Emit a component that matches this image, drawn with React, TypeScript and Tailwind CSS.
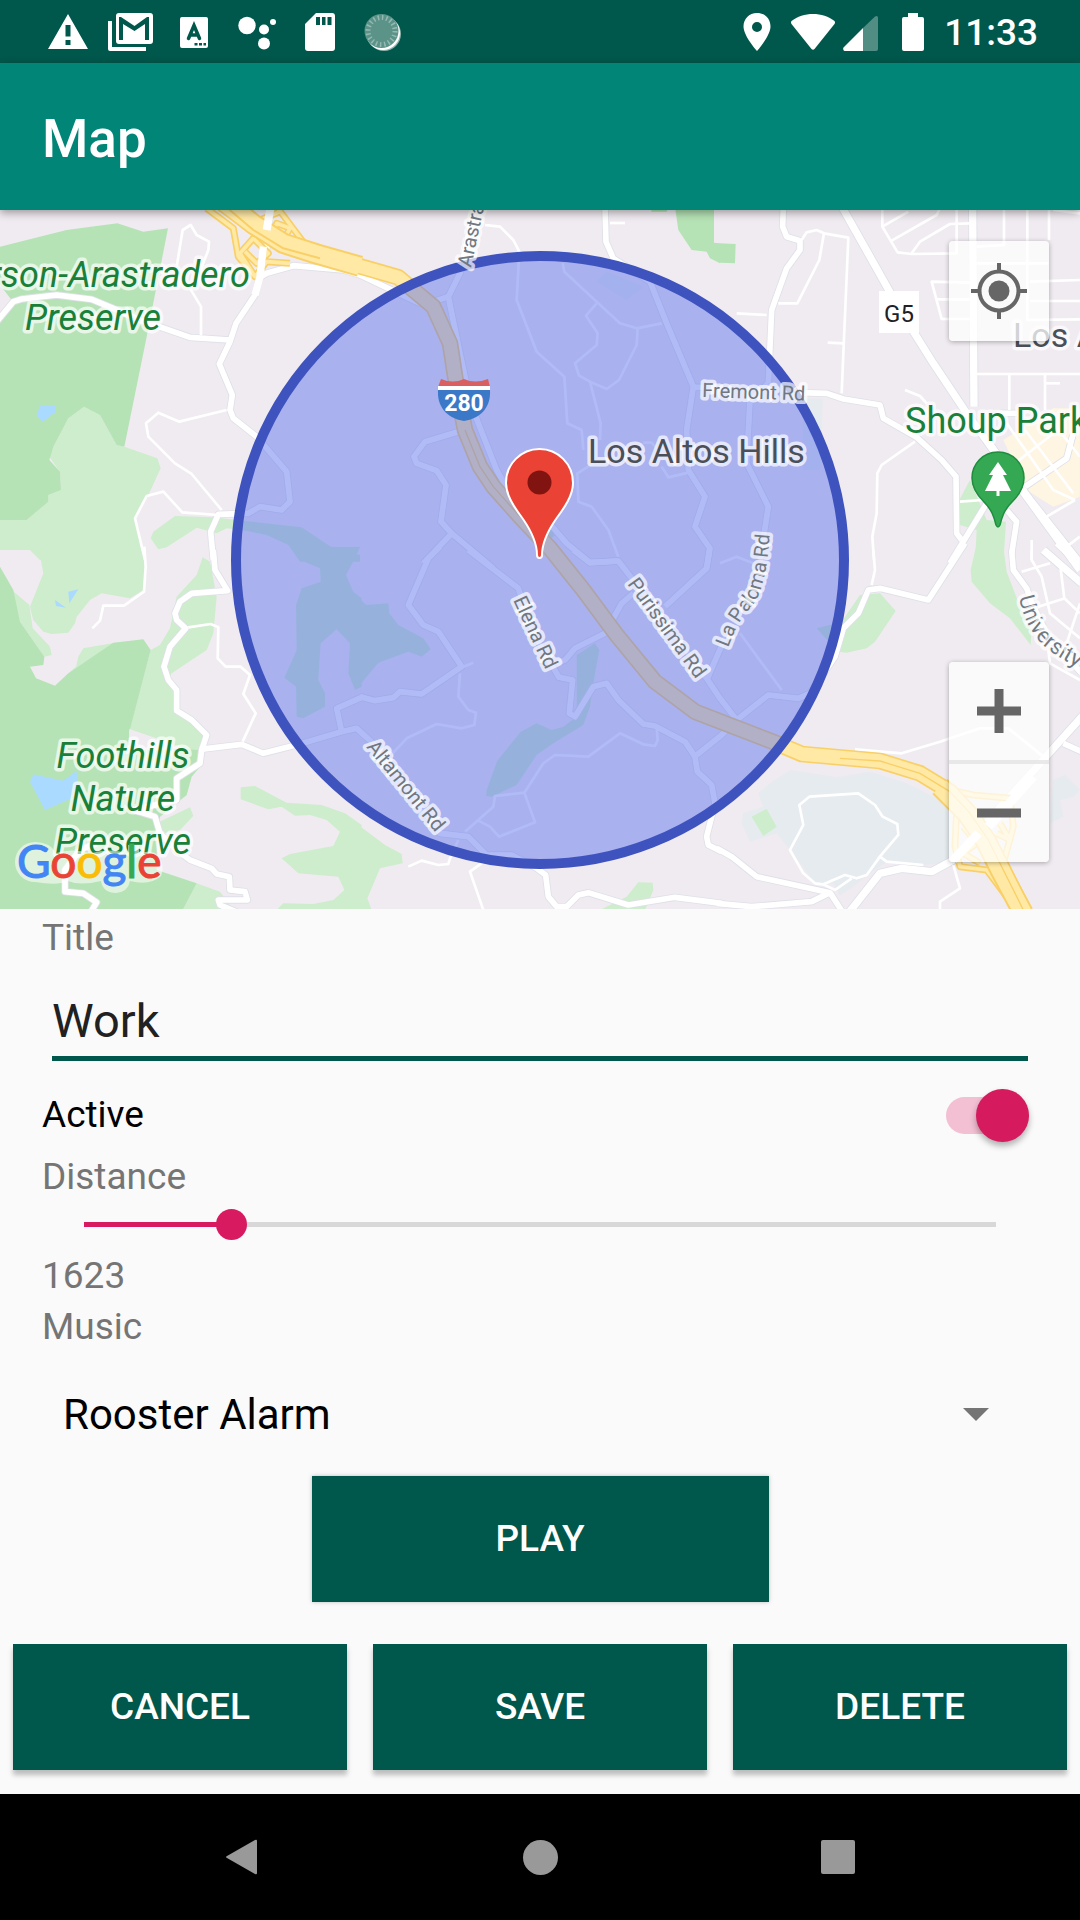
import { useState } from "react";

type Sheet = {
  x: number;
  y: number;
  dark?: string[];
  light?: string[];
  gray?: string[];
  town?: string[];
  ground?: string[];
  water?: string[];
  wide?: string[];
  medium?: string[];
  thin?: string[];
};

/* The map is surveyed in six sheets; every sheet is three units per pixel. */
const sheets: Sheet[] = [
  {
    x: 0,
    y: 600,
    dark: ["0,140 200,90 352,70 430,95 504,85 440,410 373,740 350,735 300,645 252,620 205,655 160,740 148,780 180,815 183,870 145,885 145,905 80,960 0,960"],
    light: [
      "148,770 180,815 183,870 145,885 145,905 80,960 0,960 0,1045 90,1050 120,1080 435,1080 405,955 445,885 482,805 472,775 373,740 350,735 300,645 252,620 205,655 160,740",
      "452,1015 460,995 525,948 640,952 730,962 905,982 995,1042 1080,1065 1080,1085 900,1085 865,1035 800,1005 725,990 680,985 650,1000 590,983 500,1042 475,1048",
    ],
    ground: ["0,255 35,300 0,345"],
    water: ["120,618 165,616 168,635 127,666 110,645"],
    medium: [
      "812,20 800,150 780,230 765,285 708,370 690,425 658,492 697,585 690,630 700,655 770,710 860,815 870,905 845,930 780,920 745,940 655,943 632,995 640,1080",
      "-10,365 40,305 65,297 170,285 275,298 340,325 420,360 570,412 690,420",
      "780,232 800,220 880,197 1030,210 1080,225 1260,310",
    ],
    thin: [
      "530,200 548,90 572,75 590,105 627,125 625,150 590,240 570,265 603,320 603,405",
      "680,630 538,665 475,638 438,670 445,710 525,790 575,822 665,930",
      "655,945 547,937 490,875 440,888 405,955 435,1080",
    ],
  },
  {
    x: 1080,
    y: 600,
    dark: ["945,20 1062,20 1062,128 1080,130 1080,190 1050,175 1040,155 995,150 955,90", "870,20 925,20 920,35 875,35"],
    gray: ["740,215 710,245 800,300 850,260"],
    light: ["560,1000 575,980 592,1000 575,1015"],
    medium: [
      "345,20 300,220 265,290 300,460 330,600 355,670 410,810 450,880 560,960 620,1030 690,1088 775,1083",
      "265,290 220,305",
      "735,20 738,125 760,175 870,245 920,370 1000,560 980,690 985,810 1035,890 1005,980 1050,1045 1040,1105",
      "295,695 195,725 162,770 170,790 230,812 258,855 243,965 275,1000 400,1105",
      "275,1000 190,1090",
      "1000,562 1090,562",
    ],
    thin: [
      "375,75 420,80 460,120 478,155 470,300 530,455 613,530 622,670 665,690 670,750",
      "750,69 795,69",
      "608,190 613,215 710,305 780,370 830,385 905,370",
      "710,310 678,347 713,400 710,435 645,490 657,527 690,545 740,567 777,540 830,435 833,385",
      "690,545 722,670 720,720",
      "905,800 925,832 985,818",
      "700,790 652,820 655,905 695,920 745,990 775,1070",
      "850,728 875,728 890,745",
    ],
  },
  {
    x: 2160,
    y: 600,
    dark: ["0,130 47,132 45,190 0,188"],
    light: ["750,840 800,960 858,965 850,1090 765,1090 770,990 720,975 718,900"],
    gray: ["250,595 308,597 305,700 300,810 250,810"],
    town: ["850,720 1000,625 1080,625 1080,890 1000,920 920,870"],
    wide: ["360,10 540,330 640,490 740,640 930,900 1080,1090", "758,20 762,620", "800,720 920,890 1080,1110"],
    medium: [
      "190,20 188,80 200,110 240,122 240,150 200,205 155,330 145,550",
      "145,550 90,600 80,790 145,920 120,1080",
      "240,578 320,580 370,597 480,615 490,655 590,712 665,780 708,830 710,1000 725,1020",
      "1060,700 1040,775 915,860",
      "800,910 690,1090",
      "860,930 890,965 875,1060",
      "830,640 890,640",
    ],
    thin: [
      "245,120 260,97 290,90 312,100 385,113 365,580",
      "312,100 298,180 232,310 175,310",
      "323,428 370,430",
      "50,340 140,345",
      "487,20 487,80 533,157 575,162 710,160 710,20",
      "575,160 600,125 690,72 750,70",
      "487,80 565,35",
      "515,122 650,45 660,25",
      "750,357 665,357 635,245 750,248",
      "650,298 750,298",
      "852,20 852,135 770,140",
      "922,20 922,360 1080,358",
      "987,20 987,120",
      "770,190 985,190",
      "930,245 1080,240",
      "930,303 1080,303",
      "770,522 1080,522",
      "868,522 868,630",
      "975,522 975,630",
      "975,550 1020,550",
      "585,725 485,795 472,820 470,940 457,1010 462,1080",
      "555,570 600,588 620,610",
      "860,670 1000,870 1065,900",
      "915,690 1060,880",
      "985,650 1080,770",
      "885,790 1000,700",
      "980,950 1065,900",
      "1080,1010 1040,1040",
      "720,905 790,900",
      "935,1020 935,1080",
      "1000,30 1080,40",
    ],
  },
  {
    x: 0,
    y: 1650,
    dark: ["0,50 40,120 60,215 133,320 130,345 90,350 108,385 165,407 205,370 340,278 430,268 452,300 388,545 400,590 600,600 600,650 575,680 560,735 480,800 470,840 470,960 590,1000 548,1080 0,1080"],
    light: [
      "115,-10 425,-10 437,50 430,120 390,145 305,130 270,150 230,200 225,220 205,248 155,252 130,245 100,210 90,170 130,70",
      "-5,0 -5,-10 110,-10 90,0",
      "35,120 88,165 98,235 150,290 155,315 133,320 60,215",
      "228,350 235,320 250,295 345,278 205,370",
      "452,300 480,285 510,235 530,140 590,75 608,22 630,35 650,140 640,250 620,300 515,370 500,400 530,430 530,480 625,555 600,610 388,540",
      "470,820 570,772 580,797 540,840 490,850",
      "548,1080 590,1000 660,1025 700,1080",
      "722,712 765,708 860,758 965,765 1035,790 1085,825 1085,1080 830,1080 850,1060 940,1062 1000,1050 1033,1020 1015,980 895,970 845,925 870,912 1000,888 1020,845 980,810 930,795 885,797 845,770 805,778 722,748",
      "880,-10 900,30 960,55 962,95 905,115 888,165 890,300 853,383 888,410 890,500 910,505 975,470 975,430 955,390 962,280 1010,238 1050,280 1045,370 1065,420 1085,410 1085,145 1060,125 1038,75 1070,15 1080,-10",
    ],
    ground: ["388,537 500,575 510,600 385,600"],
    water: ["205,125 235,118 208,160", "165,150 198,173 168,168", "90,695 100,673 190,692 230,662 232,700 215,745 135,780"],
    medium: [
      "640,0 645,60 683,122 575,130 540,155 525,190 530,210 557,235 510,290 492,350 505,390 530,420 530,482 575,510 620,555 605,600 600,640 530,685 530,750 400,780 465,800 480,850 530,900 570,930 635,955 650,972 688,980 690,1020 735,1025 742,1050 655,1050 660,1065 720,1090",
      "600,598 725,583 790,610 900,582 1025,545 1070,535 1130,590",
      "1025,545 1010,475 1090,440",
      "290,880 240,900 195,960 195,1025 250,1030 290,1057 270,1090",
    ],
    thin: [
      "433,-10 437,50 432,125 372,167 310,167 300,212 277,235",
      "565,232 632,222 655,232 653,325 677,350 722,350 750,375 730,432 767,490 728,575",
    ],
  },
  {
    x: 1080,
    y: 1650,
    light: [
      "-5,145 20,165 85,160 88,190 115,225 190,265 212,298 185,320 145,305 55,338 -5,410",
      "650,315 705,280 718,300 700,400 690,470 670,525 580,580 530,615 470,705 395,740 378,738 380,720 412,632 482,545 530,520 575,540 610,530 650,500",
      "-5,825 75,885 125,912 128,940 60,955 22,1045 35,1080 -5,1080",
      "720,1080 800,1040 835,997 878,998 880,1020 855,1080",
    ],
    medium: [
      "0,440 45,452 100,443 120,425 185,432 305,350 235,245 190,225 145,165 205,25 240,-10",
      "325,0 475,115 520,250 590,370 597,382 638,390 628,490 645,500 700,410 740,400 775,450 850,522 885,528 975,575 1005,620 1012,665 1055,705 1065,760 1040,860 1045,885 1085,905",
      "590,340 615,330 645,295 735,250 785,160 820,130",
      "1010,615 1085,555 1130,510",
      "640,0 690,38 775,33 850,130 1030,370 1080,445 1130,510",
      "1048,0 1040,55 915,170",
      "1040,390 1110,230",
      "50,590 240,850 325,860 380,915 455,915 530,955 557,975 565,1040 590,1070 620,1070 655,1035 685,1028 805,1065 945,1042 1085,1060",
    ],
    thin: [
      "310,350 340,338",
      "300,370 295,440 325,480 348,488 343,525 305,535 230,522 140,565 100,608 60,580",
      "890,530 893,570 885,588 850,583 780,550 685,620 585,615 550,640 493,728 405,738 400,770 315,845",
      "355,812 390,830 417,860 525,817 493,728",
      "295,870 270,925 265,942 235,945 185,932 145,950",
      "385,925 330,965 370,1080",
    ],
  },
  {
    x: 2160,
    y: 1650,
    gray: [
      "150,700 210,660 350,682 450,665 560,700 690,765 700,935 610,945 500,935 430,985 400,1010 360,1035 340,1000 285,1000 210,900 170,850 90,875 65,820 70,790 130,770 115,730",
      "1000,690 1035,675 1080,720 1060,740 1020,750 1030,800 990,820",
    ],
    light: [
      "95,800 140,777 170,830 130,858",
      "290,235 365,215 420,135 480,130 527,183 465,275 440,295 380,308 355,305 330,280",
      "768,-10 850,-10 860,65 900,170 935,240 932,285 870,205 810,160 755,95 752,60",
    ],
    wide: ["385,1090 480,970 545,955 635,965 700,930 1090,495", "970,0 1085,100"],
    medium: [
      "-10,895 35,920 110,980 330,1028 370,1090",
      "-10,1060 95,1070 275,1055 330,1028",
      "1030,580 1085,605",
      "50,510 145,435 235,445 270,430 345,320 370,235 415,190 445,120 480,115 625,150 735,-20",
      "875,0 880,60 920,115 940,170 985,260 1085,370",
      "1010,-20 1085,50",
    ],
    thin: [
      "475,925 535,855 532,822 488,800 465,765 415,730 268,740 238,765 250,825 210,900 250,970 285,1000 310,1003 375,975 410,985 440,975 480,920 500,935 610,945",
      "310,1003 345,1020 395,985",
      "405,598 545,610 660,575 780,535 865,535 970,620",
      "700,945 720,1015 660,1055 660,1080",
      "460,0 465,60 455,105",
      "60,250 185,420",
      "0,40 50,20 100,40",
      "935,0 935,30 965,80 990,190 1080,265",
      "1020,40 1033,145 1080,190",
      "905,65 990,40",
      "955,170 1035,145",
      "1080,160 1040,280",
      "985,300 990,340 1080,390",
    ],
  },
];

const freeway =
  "640,590 760,680 850,730 950,762 1080,799 1195,832 1300,920 1350,1030 1370,1160 1395,1290 1440,1400 1480,1460 1560,1550 1650,1645 1750,1770 1850,1905 1965,2045 2085,2135 2330,2230 2405,2262 2640,2283 2760,2320 2850,2375 2910,2440 2965,2520 3010,2610 3075,2740";

/* The freeway widens where its exits leave it. */
const exitLanes = ["660,590 760,672 850,730 950,762 1080,799", "2820,2360 2900,2440 2955,2520 3000,2610 3070,2740"];

const ramps = [
  "620,625 700,685 715,770 765,830 800,785 870,790",
  "765,830 720,760 760,715 805,760 770,790 735,755",
  "830,620 920,740",
  "720,640 780,660 840,635",
  "810,720 830,670 870,685 850,720",
  "2850,2370 2920,2385 3030,2395 3040,2480 3010,2590",
  "2870,2430 2865,2540 2880,2600 2960,2610 3020,2690",
  "2890,2480 2930,2530 2890,2560 2940,2590",
  "3000,2470 3030,2520 2990,2500",
];

function Lines({ sheet, kind, width, color }: { sheet: Sheet; kind: "wide" | "medium" | "thin"; width: number; color: string }) {
  return (
    <g transform={`translate(${sheet.x} ${sheet.y})`} fill="none" stroke={color} strokeWidth={width} strokeLinejoin="round">
      {(sheet[kind] ?? []).map((p) => (
        <polyline key={p} points={p} />
      ))}
    </g>
  );
}

function Areas({ sheet, kind, color }: { sheet: Sheet; kind: "dark" | "light" | "gray" | "town" | "ground" | "water"; color: string }) {
  return (
    <g transform={`translate(${sheet.x} ${sheet.y})`} fill={color}>
      {(sheet[kind] ?? []).map((p) => (
        <polygon key={p} points={p} />
      ))}
    </g>
  );
}

function MapDrawing() {
  return (
    <svg viewBox="0 210 1080 699" className="block w-full" role="img" aria-label="Map of Los Altos Hills">
      <rect y="210" width="1080" height="699" fill="#f0ebf0" />
      <g transform="scale(0.33333)">
        {sheets.map((s, i) => (
          <g key={i}>
            <Areas sheet={s} kind="gray" color="#e5ebee" />
            <Areas sheet={s} kind="town" color="#fef5e2" />
            <Areas sheet={s} kind="light" color="#cdedcd" />
            <Areas sheet={s} kind="dark" color="#b5e3b5" />
            <Areas sheet={s} kind="ground" color="#f0ebf0" />
            <Areas sheet={s} kind="water" color="#aadaff" />
          </g>
        ))}
        {sheets.map((s, i) => (
          <g key={i}>
            <Lines sheet={s} kind="wide" width={27} color="#dfe0e8" />
            <Lines sheet={s} kind="medium" width={22} color="#dfe0e8" />
          </g>
        ))}
        {sheets.map((s, i) => (
          <g key={i}>
            <Lines sheet={s} kind="thin" width={8} color="#ffffff" />
            <Lines sheet={s} kind="medium" width={17} color="#ffffff" />
            <Lines sheet={s} kind="wide" width={22} color="#ffffff" />
          </g>
        ))}
        <g fill="none" strokeLinejoin="round">
          {ramps.map((p) => (
            <polyline key={p} points={p} stroke="#f9d067" strokeWidth="21" />
          ))}
          {ramps.map((p) => (
            <polyline key={p} points={p} stroke="#ffe9a5" strokeWidth="11" />
          ))}
          {exitLanes.map((p) => (
            <polyline key={p} points={p} stroke="#f9d067" strokeWidth="64" />
          ))}
          <polyline points={freeway} stroke="#f9d067" strokeWidth="50" />
          {exitLanes.map((p) => (
            <polyline key={p} points={p} stroke="#ffe9a5" strokeWidth="52" />
          ))}
          <polyline points={freeway} stroke="#ffe9a5" strokeWidth="40" />
          <polyline points="1395,1290 1440,1400 1480,1460 1560,1550" stroke="#f9d067" strokeWidth="4" />
          <polyline points="2520,2275 2640,2283 2760,2320 2850,2375 2910,2440 2965,2520 3010,2610 3075,2740" stroke="#f9d067" strokeWidth="4" />
          <polyline points="660,605 760,690 850,745 960,775" stroke="#f9d067" strokeWidth="6" />
          <polyline points="812,620 800,690" stroke="#ffffff" strokeWidth="24" />
          <polyline points="790,740 780,830 765,885" stroke="#ffffff" strokeWidth="22" />
          <polyline points="2860,2580 2935,2500" stroke="#ffffff" strokeWidth="26" />
          <polyline points="2965,2480 3100,2330" stroke="#ffffff" strokeWidth="26" />
        </g>
      </g>

      <circle cx="540" cy="560" r="304" fill="#5a70ef" fillOpacity="0.47" stroke="none" />
      <circle cx="540" cy="560" r="304" fill="none" stroke="#3f53bf" strokeWidth="10" />

      <g
        fontFamily="Roboto, sans-serif"
        stroke="#ffffff"
        strokeOpacity="0.7"
        strokeWidth="7"
        strokeLinejoin="round"
        style={{ paintOrder: "stroke" }}
      >
        <g fontSize="36" fontStyle="italic" fill="#188038">
          <text x="250" y="287" textAnchor="end">rson-Arastradero</text>
          <text x="93" y="330" textAnchor="middle">Preserve</text>
          <text x="123" y="768" textAnchor="middle">Foothills</text>
          <text x="123" y="811" textAnchor="middle">Nature</text>
          <text x="123" y="854" textAnchor="middle">Preserve</text>
        </g>
        <text x="905" y="433" fontSize="36" fill="#188038">Shoup Park</text>
        <text x="588" y="463" fontSize="34" fill="#4a4f58">Los Altos Hills</text>
        <text x="1013" y="347" fontSize="34" fill="#4a4f58">Los Altos</text>
        <g fontSize="20" fill="#6f7880">
          <text transform="translate(702 397) rotate(2)">Fremont Rd</text>
          <text transform="translate(513 600) rotate(65)">Elena Rd</text>
          <text transform="translate(627 584) rotate(54)">Purissima Rd</text>
          <text transform="translate(366 747) rotate(51)">Altamont Rd</text>
          <text transform="translate(471 268) rotate(-78)">Arastradero Rd</text>
          <path id="paloma" d="M728 648 Q738 620 752 606 Q770 585 771 500" fill="none" stroke="none" />
          <text>
            <textPath href="#paloma">La Paloma Rd</textPath>
          </text>
          <path id="university" d="M1019 597 Q1026 630 1045 647 Q1070 668 1150 700" fill="none" stroke="none" />
          <text fontSize="22">
            <textPath href="#university">University Ave</textPath>
          </text>
        </g>
      </g>

      <rect x="879" y="291" width="40" height="42" fill="#ffffff" />
      <text x="899" y="322" fontSize="24" textAnchor="middle" fontFamily="Roboto, sans-serif" fill="#202124">G5</text>

      <path d="M441 379 Q453 384 464 379 Q475 384 488 379 L490 387 H438 Z" fill="#d96060" />
      <path d="M438 386 H490 V390 H438 Z" fill="#ffffff" />
      <path d="M438 390 H490 C491 405 483 418 464 421 C445 418 437 405 438 390 Z" fill="#3b79c8" />
      <text x="464" y="411" fontSize="23" fontWeight="700" textAnchor="middle" fontFamily="Roboto, sans-serif" fill="#ffffff">280</text>

      <path
        d="M539.500 449 C521 449 506 464 506 483 C506 495 514 507 523 519 C534 535 537 545 537 555 Q537 558 539.500 558 Q542 558 542 555 C542 545 545 535 556 519 C565 507 573 495 573 483 C573 464 558 449 539.500 449 Z"
        fill="#ea4335"
        stroke="#ffffff"
        strokeWidth="2"
      />
      <circle cx="539.500" cy="482.500" r="12" fill="#811411" />

      <path
        d="M998 452 C983 452 972 464 972 478 C972 488 977 495 984 502 C992 510 994 517 996 525 Q998 529 1000 525 C1002 517 1004 510 1012 502 C1019 495 1024 488 1024 478 C1024 464 1013 452 998 452 Z"
        fill="#34a853"
        stroke="#1e8e3e"
        strokeWidth="1.500"
      />
      <path d="M998 462 L1007 475 H1003 L1011 491 H999.500 V496 H996.500 V491 H985 L993 475 H989 Z" fill="#ffffff" />

      {/* Pale glow behind the provider's logo */}
      <path
        d="M35 842 a20 20 0 0 0 0 40 Q58 886 68 881 Q80 886 101 881 Q103 893 116 893 Q128 892 130 881 Q150 886 161 876 Q166 862 155 853 Q146 850 139 854 V845 H128 V853 Q108 848 92 853 Q70 848 56 853 Q50 842 35 842 Z"
        fill="#ffffff"
        fillOpacity="0.55"
      />
      <text x="17" y="878" fontSize="46" fontFamily="Lato, sans-serif" strokeWidth="1">
        <tspan fill="#4285f4" stroke="#4285f4">G</tspan>
        <tspan fill="#ea4335" stroke="#ea4335">o</tspan>
        <tspan fill="#fbbc05" stroke="#fbbc05">o</tspan>
        <tspan fill="#4285f4" stroke="#4285f4">g</tspan>
        <tspan fill="#34a853" stroke="#34a853">l</tspan>
        <tspan fill="#ea4335" stroke="#ea4335">e</tspan>
      </text>
    </svg>
  );
}

function StatusBar() {
  const slot = "flex w-[63px] justify-center";
  return (
    <div className="flex h-[63px] items-center justify-between bg-[#00574b] pr-[42px] pl-9 text-white">
      <div className="flex">
        <span className={slot}>
          <svg width="40" height="38" viewBox="0 0 40 38" fill="currentColor">
            <path fillRule="evenodd" d="M20 1 L40 36 H0 Z M17.500 12 V23.500 H22.500 V12 Z M17.500 27 V32 H22.500 V27 Z" />
          </svg>
        </span>
        <span className={slot}>
          <svg width="45" height="38" viewBox="0 0 45 38" fill="currentColor">
            <path d="M0 8 H4 V34 H38 V38 H2 Q0 38 0 36 Z" />
            <path fillRule="evenodd" d="M11 0 H42 Q45 0 45 3 V28 Q45 31 42 31 H11 Q8 31 8 28 V3 Q8 0 11 0 Z M11 4 V27 H15 V11 L26.500 18 L37 11 V27 H41 V4 H39 L26.500 13 L13 4 Z" />
          </svg>
        </span>
        <span className={slot}>
          <svg width="28" height="38" viewBox="0 0 28 38" fill="none">
            <rect y="4" width="28" height="31" rx="2" fill="white" />
            <path d="M8.500 25.500 L14 12.500 L19.500 25.500 M10 22 H18" stroke="#00574b" strokeWidth="3.500" strokeLinecap="round" />
            <path d="M14.500 30 h3 v2.500 h-3 Z M19 30 h3 v2.500 h-3 Z M23.500 30 h2.500 v2.500 h-2.500 Z" fill="#00574b" />
          </svg>
        </span>
        <span className={slot}>
          <svg width="38" height="38" viewBox="0 0 38 38" fill="currentColor">
            <circle cx="9" cy="12.500" r="8.700" />
            <circle cx="26" cy="16.500" r="5" />
            <circle cx="35" cy="9" r="3" />
            <circle cx="26" cy="30.500" r="6" />
          </svg>
        </span>
        <span className={slot}>
          <svg width="30" height="38" viewBox="0 0 30 38" fill="currentColor">
            <path fillRule="evenodd" d="M11 0 H27 Q30 0 30 3 V35 Q30 38 27 38 H3 Q0 38 0 35 V11 Z M11 4 V12 H15 V4 Z M17 4 V12 H20.500 V4 Z M22.500 4 V12 H26.500 V4 Z" />
          </svg>
        </span>
        <span className={slot}>
          <svg width="38" height="38" viewBox="0 0 38 38">
            <circle cx="20" cy="21" r="17" fill="#8fb5ae" />
            <circle cx="19" cy="20" r="17" fill="#ffffff" />
            <circle cx="17.500" cy="18" r="17" fill="#5b9389" />
            <circle cx="17.500" cy="18" r="13.500" fill="none" stroke="#94b9b2" strokeWidth="5" strokeDasharray="1.500 2.740" />
          </svg>
        </span>
      </div>
      <div className="flex items-center">
        <svg className="mr-5" width="28" height="38" viewBox="0 0 28 38" fill="currentColor">
          <path fillRule="evenodd" d="M14 0 C6 0 0.500 6 0.500 13.500 C0.500 23 14 38 14 38 C14 38 27.500 23 27.500 13.500 C27.500 6 22 0 14 0 Z M14 9 A5 5 0 1 1 14 19 A5 5 0 1 1 14 9 Z" />
        </svg>
        <svg className="mr-2" width="44" height="38" viewBox="0 0 44 38" fill="currentColor">
          <path d="M0.500 8 C12 -1.500 32 -1.500 43.500 8 Q44.500 9.500 43.500 11 L23.500 36 Q22 37.500 20.500 36 L0.500 11 Q-0.500 9.500 0.500 8 Z" />
        </svg>
        <svg className="mr-6" width="35" height="38" viewBox="0 0 35 38" fill="currentColor">
          <path d="M20 15 L32 3.500 Q35 2 35 5 V36 Q35 38 33 38 H20 Z" opacity="0.320" />
          <path d="M20 15 V38 H1.500 Q-0.500 37 0.500 34.500 Z" />
        </svg>
        <svg className="mr-5" width="22" height="38" viewBox="0 0 22 38" fill="currentColor">
          <path d="M6 0 H16 V4 H20 Q22 4 22 6 V36 Q22 38 20 38 H2 Q0 38 0 36 V6 Q0 4 2 4 H6 Z" />
        </svg>
        <span className="pt-0.5 text-[37px] leading-[44px] font-medium">11:33</span>
      </div>
    </div>
  );
}

const actionButton = "h-[126px] bg-[#00574b] text-[37px] font-medium text-white";

export default function App() {
  const [title, setTitle] = useState("Work");
  const [active, setActive] = useState(true);
  const [distance, setDistance] = useState(1623);

  return (
    <div className="flex min-h-screen flex-col bg-[#fafafa] font-['Roboto',sans-serif] text-[37px]">
      <StatusBar />
      <header className="relative z-10 flex h-[147px] items-center bg-[#008577] px-[42px] pt-1 shadow-[0_3px_8px_rgba(0,0,0,0.35)]">
        <h1 className="text-[53px] leading-[60px] font-medium text-white">Map</h1>
      </header>

      <section className="relative overflow-hidden">
        <MapDrawing />
        <button
          type="button"
          aria-label="My location"
          className="absolute top-[31px] right-[31px] flex h-[100px] w-[100px] items-center justify-center rounded-[4px] bg-white/75 shadow-[0_1px_5px_rgba(0,0,0,0.3)]"
        >
          <svg width="56" height="56" viewBox="0 0 56 56" fill="none" stroke="#666666">
            <circle cx="28" cy="28" r="19.500" strokeWidth="4" />
            <circle cx="28" cy="28" r="10.500" fill="#666666" stroke="none" />
            <path d="M28 0 V9 M28 47 V56 M0 28 H9 M47 28 H56" strokeWidth="4" />
          </svg>
        </button>
        <div className="absolute right-[31px] bottom-[47px] flex w-[100px] flex-col rounded-[4px] bg-white/75 shadow-[0_1px_5px_rgba(0,0,0,0.3)]">
          <button type="button" aria-label="Zoom in" className="flex h-[102px] items-center justify-center border-b-4 border-[#e3e3e3]/80">
            <svg width="44" height="44" viewBox="0 0 44 44" fill="#666666">
              <path d="M17.500 0 H26.500 V17.500 H44 V26.500 H26.500 V44 H17.500 V26.500 H0 V17.500 H17.500 Z" />
            </svg>
          </button>
          <button type="button" aria-label="Zoom out" className="flex h-[98px] items-center justify-center">
            <svg width="44" height="44" viewBox="0 0 44 44" fill="#666666">
              <path d="M0 17.500 H44 V26.500 H0 Z" />
            </svg>
          </button>
        </div>
      </section>

      <main className="flex grow flex-col">
        <div className="flex flex-col px-[42px]">
          <label htmlFor="title" className="leading-[58px] text-[#757575]">
            Title
          </label>
          <input
            id="title"
            value={title}
            onChange={(e) => setTitle(e.target.value)}
            className="mx-[10px] mt-[10px] h-[84px] border-b-[5px] border-[#00574b] bg-transparent pt-2 text-[47px] text-[#212121] outline-none"
          />
          <div className="mt-[26px] flex h-[56px] items-center justify-between pr-[9px]">
            <label htmlFor="active" className="leading-[56px] text-black">
              Active
            </label>
            <input
              id="active"
              type="checkbox"
              role="switch"
              checked={active}
              onChange={(e) => setActive(e.target.checked)}
              className="relative h-[53px] w-[83px] appearance-none before:absolute before:inset-x-0 before:top-2 before:h-[37px] before:rounded-full before:bg-[#bdbdbd] after:absolute after:top-0 after:left-0 after:h-[53px] after:w-[53px] after:rounded-full after:bg-[#fafafa] after:shadow-[0_4px_6px_rgba(0,0,0,0.3)] checked:before:bg-[#f2bfd3] checked:after:left-[30px] checked:after:bg-[#d51a5e]"
            />
          </div>
          <label htmlFor="distance" className="mt-[6px] leading-[56px] text-[#757575]">
            Distance
          </label>
          <div className="relative mx-[42px] flex h-[38px] items-center">
            <div className="h-[5px] w-full bg-[#d8d8d8]">
              <div className="h-full bg-[#d81b60]" style={{ width: `${distance / 100}%` }} />
            </div>
            <input
              id="distance"
              type="range"
              min={0}
              max={10000}
              value={distance}
              onChange={(e) => setDistance(Number(e.target.value))}
              className="absolute inset-y-0 -left-4 w-[calc(100%+32px)] appearance-none bg-transparent outline-none [&::-webkit-slider-thumb]:h-[31px] [&::-webkit-slider-thumb]:w-[31px] [&::-webkit-slider-thumb]:appearance-none [&::-webkit-slider-thumb]:rounded-full [&::-webkit-slider-thumb]:bg-[#d81b60]"
            />
          </div>
          <output htmlFor="distance" className="mt-[7px] leading-[51px] text-[#757575]">
            {distance}
          </output>
          <label htmlFor="music" className="leading-[51px] text-[#757575]">
            Music
          </label>
        </div>

        <div className="relative flex items-center">
          <select
            id="music"
            defaultValue="Rooster Alarm"
            className="h-[124px] w-full appearance-none bg-transparent pl-[63px] text-[42px] text-black outline-none"
          >
            <option>Rooster Alarm</option>
            <option>Church Bells</option>
          </select>
          <svg className="pointer-events-none absolute right-[91px]" width="26" height="13" viewBox="0 0 26 13" fill="#757575">
            <path d="M0 0 H26 L13 13 Z" />
          </svg>
        </div>

        <button type="button" className={`${actionButton} w-[457px] self-center shadow-[0_0_4px_rgba(0,0,0,0.25)]`}>
          PLAY
        </button>

        <div className="mt-[42px] mb-6 flex gap-[26px] px-[13px]">
          {["CANCEL", "SAVE", "DELETE"].map((name) => (
            <button key={name} type="button" className={`${actionButton} flex-1 shadow-[0_5px_5px_rgba(0,0,0,0.25)]`}>
              {name}
            </button>
          ))}
        </div>
      </main>

      <nav className="flex h-[126px] items-center justify-center gap-[230px] bg-black">
        <button type="button" aria-label="Back" className="flex w-[68px] justify-center">
          <svg width="34" height="36" viewBox="0 0 34 36" fill="#999999">
            <path d="M30 1 Q32 0 32 2 V34 Q32 36 30 35 L2 19 Q0 18 2 17 Z" />
          </svg>
        </button>
        <button type="button" aria-label="Home" className="flex w-[68px] justify-center">
          <span className="h-[35px] w-[35px] rounded-full bg-[#999999]" />
        </button>
        <button type="button" aria-label="Recent apps" className="flex w-[68px] justify-center">
          <span className="h-[34px] w-[34px] rounded-[2px] bg-[#999999]" />
        </button>
      </nav>
    </div>
  );
}
